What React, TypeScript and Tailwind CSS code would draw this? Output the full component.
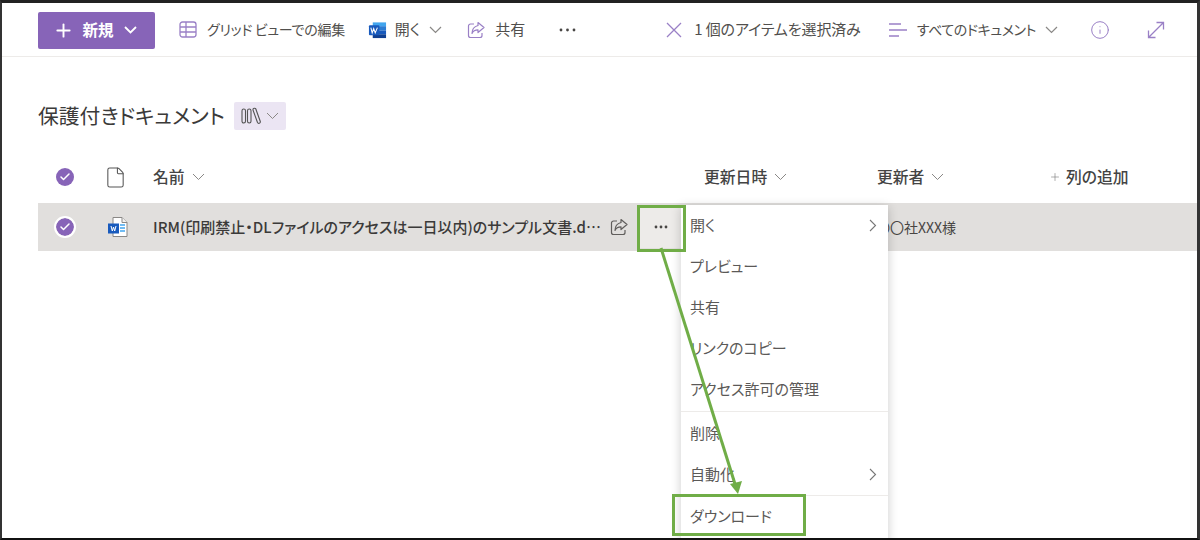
import { Plus, Info, File, Check } from 'lucide-react';

const jp = "font-['Noto_Sans_CJK_JP','Noto_Sans',sans-serif] [font-feature-settings:'palt']";

function WordIcon({ small }: { small?: boolean }) {
  if (small) {
    return (
      <svg width="22" height="22" viewBox="0 0 22 22">
        <path d="M6 1.500h9l5 5v14H6z" fill="#fff" stroke="#8a8886" />
        <path d="M15 1.500v5h5" fill="#f3f2f1" stroke="#8a8886" />
        <path d="M13 9h5M13 12h5M13 15h5" stroke="#41a5ee" strokeWidth="1.500" />
        <rect x="1" y="7.500" width="11" height="10" fill="#185abd" />
        <path d="M4 10l1.300 5 1.200-4 1.200 4 1.300-5" fill="none" stroke="#fff" strokeWidth="1" />
      </svg>
    );
  }
  return (
    <svg width="19" height="20" viewBox="0 0 20 20">
      <rect x="5" y="2" width="14" height="4" fill="#41a5ee" />
      <rect x="5" y="6" width="14" height="4.500" fill="#2b7cd3" />
      <rect x="5" y="10.500" width="14" height="4" fill="#185abd" />
      <rect x="5" y="14.500" width="14" height="4" fill="#103f91" />
      <rect x="1" y="5" width="11" height="10.500" rx="1" fill="#185abd" />
      <path d="M3 7.500l1.400 5.500 1.600-4.500 1.600 4.500L9.900 7.500" fill="none" stroke="#fff" strokeWidth="1.100" />
    </svg>
  );
}

function Caret({ className, color = '#8a8886', width = 1.2 }: { className?: string; color?: string; width?: number }) {
  return (
    <svg width="13" height="8" viewBox="0 0 13 8" fill="none" stroke={color} strokeWidth={width} className={className}>
      <path d="M1 1l5.500 5.500L12 1" />
    </svg>
  );
}

function Dots({ width, color = '#484644' }: { width: number; color?: string }) {
  return (
    <svg width={width} height="4" viewBox={`0 0 ${width} 4`} fill={color}>
      <circle cx="2" cy="2" r="1.400" />
      <circle cx={width / 2} cy="2" r="1.400" />
      <circle cx={width - 2} cy="2" r="1.400" />
    </svg>
  );
}

function ShareIcon({ color }: { color: string }) {
  return (
    <svg width="18" height="18" viewBox="0 0 18 18" fill="none" stroke={color} strokeWidth="1.200" strokeLinejoin="round">
      <path d="M7 3H3.500A2 2 0 0 0 1.500 5v9.500a2 2 0 0 0 2 2H13a2 2 0 0 0 2-2V12" />
      <path d="M11 1.500L17 6.500L11 11.500V8.800C8 8.800 6 10 5 12.500C5 8.500 7 5.500 11 4.500z" />
    </svg>
  );
}

function CheckCircle({ ring }: { ring?: boolean }) {
  return (
    <span className={`flex h-[18px] w-[18px] items-center justify-center rounded-full bg-[#8764b8] ${ring ? 'outline-2 outline-white' : ''}`}>
      <Check size={12} strokeWidth={3} className="text-white" />
    </span>
  );
}

function ToolItem({ icon, label, caret, className, labelClass }: { icon?: React.ReactNode; label: string; caret?: boolean; className?: string; labelClass?: string }) {
  return (
    <div className={`flex items-center whitespace-nowrap text-[15px] text-[#514f4d] ${className ?? ''}`}>
      {icon}
      <span className={labelClass ?? 'ml-[10px]'}>{label}</span>
      {caret && <Caret className="ml-[9px]" />}
    </div>
  );
}

function HeadCell({ label, className }: { label: string; className?: string }) {
  return (
    <div className={`flex items-center text-[15.800px] font-medium text-[#444] ${className ?? ''}`}>
      {label}
      <Caret className="ml-[7px]" width={1} />
    </div>
  );
}

const menuGroups = [
  {
    className: 'pb-[1px]',
    items: [
      { label: '開く', more: true },
      { label: 'プレビュー' },
      { label: '共有' },
      { label: 'リンクのコピー' },
      { label: 'アクセス許可の管理' },
    ],
  },
  {
    className: 'border-t border-[#edebe9] pt-[1px]',
    items: [{ label: '削除' }, { label: '自動化', more: true }],
  },
  {
    className: 'border-t border-[#edebe9] pb-[6px]',
    items: [{ label: 'ダウンロード' }],
  },
];

function ContextMenu() {
  return (
    <div className="absolute left-[679px] top-[202px] w-[207px] bg-white shadow-[0_2px_10px_rgba(0,0,0,0.2)]">
      {menuGroups.map((group, i) => (
        <div key={i} className={group.className}>
          {group.items.map((item) => (
            <div key={item.label} className="flex h-[41px] items-center justify-between pl-[9px] pr-[11px] text-[15px] text-[#5b5957]">
              {item.label}
              {item.more && (
                <svg width="8" height="13" viewBox="0 0 8 13" fill="none" stroke="#777" strokeWidth="1.100">
                  <path d="M1 1l5.500 5.500L1 12" />
                </svg>
              )}
            </div>
          ))}
        </div>
      ))}
    </div>
  );
}

export default function App() {
  return (
    <div className={`relative h-[540px] w-[1200px] overflow-hidden border-l-[2px] border-r-[3px] border-t-[3px] border-b-[2px] border-x-[#333] border-t-[#222] border-b-[#111] bg-white ${jp}`}>
      {/* command bar */}
      <div className="flex h-[54px] items-center border-b border-[#edebe9] pl-[36px] pr-[32px]">
        <div className="mt-[1px] flex h-[37px] w-[117px] items-center justify-center rounded-[2px] bg-[#8764b8] text-[15.500px] font-bold text-white">
          <Plus size={21} strokeWidth={2.2} className="-mx-[3px]" />
          <span className="ml-[11px]">新規</span>
          <Caret className="ml-[10px]" color="#fff" width={1.800} />
        </div>
        <ToolItem
          className="ml-[24px]"
          labelClass="ml-[10px] text-[14px] tracking-[-0.3px]"
          icon={
            <svg width="18" height="17" viewBox="0 0 18 17" fill="none" stroke="#9a80c6" strokeWidth="1.300">
              <rect x="1" y="1" width="16" height="15" rx="2.500" />
              <path d="M1 6h16M1 11h16M7 1v15" />
            </svg>
          }
          label="グリッド ビューでの編集"
        />
        <ToolItem className="ml-[23px]" labelClass="ml-[8px]" icon={<WordIcon />} label="開く" caret />
        <ToolItem className="ml-[25px]" icon={<ShareIcon color="#9a80c6" />} label="共有" />
        <span className="ml-[34px]"><Dots width={17} /></span>
        <ToolItem
          className="ml-auto"
          labelClass="ml-[12px] tracking-[-0.12px]"
          icon={
            <svg width="16" height="16" viewBox="0 0 16 16" fill="none" stroke="#9a80c6" strokeWidth="1.300">
              <path d="M1 1l14 14M15 1L1 15" />
            </svg>
          }
          label="1 個のアイテムを選択済み"
        />
        <ToolItem
          className="ml-[27px]"
          labelClass="ml-[10px] text-[14px] tracking-[-0.4px]"
          icon={
            <svg width="19" height="16" viewBox="0 0 19 16" fill="none" stroke="#9a80c6" strokeWidth="1.300">
              <path d="M1 2h12M1 8h18M1 14h10" />
            </svg>
          }
          label="すべてのドキュメント"
          caret
        />
        <Info size={20} strokeWidth={1.200} className="ml-[32px] text-[#9a80c6]" />
        <svg width="18" height="18" viewBox="0 0 18 18" fill="none" stroke="#9a80c6" strokeWidth="1.300" className="ml-[37px]">
          <path d="M1.500 16.500L16.500 1.500M9.500 1.500h7v7M1.500 9.500v7h7" />
        </svg>
      </div>

      {/* library title */}
      <div className="ml-[36px] mt-[45px] flex h-[28px] items-center">
        <h1 className="mb-[2px] text-[20.800px] font-normal leading-none text-[#3b3a39]">保護付きドキュメント</h1>
        <div className="ml-[9px] flex h-[28px] w-[52px] items-center justify-center gap-[5px] rounded-[2px] bg-[#ebe5f3]">
          <svg width="20" height="18" viewBox="0 0 20 18" fill="none" stroke="#555" strokeWidth="1.100">
            <rect x="1" y="2" width="3.500" height="14" rx="1.700" />
            <rect x="6.500" y="2" width="3.500" height="14" rx="1.700" />
            <path d="M12 3l4.500 12.500a1.500 1.500 0 0 0 2.800-1L15 2.500a1.500 1.500 0 0 0-3 .5z" />
          </svg>
          <Caret width={1} />
        </div>
      </div>

      {/* column headers */}
      <div className="mt-[27px] flex h-[40px] items-center pl-[54px]">
        <CheckCircle />
        <File size={23} strokeWidth={1.100} className="ml-[30px] text-[#555]" />
        <HeadCell label="名前" className="ml-[26px] w-[551px]" />
        <HeadCell label="更新日時" className="w-[173px]" />
        <HeadCell label="更新者" className="w-[172px]" />
        <div className="flex items-center text-[15.800px] font-medium text-[#444]">
          <Plus size={12} strokeWidth={1.200} className="mr-[5px] text-[#777]" />
          列の追加
        </div>
      </div>

      {/* selected row */}
      <div className="ml-[36px] mt-[6px] flex h-[48px] items-center bg-[#e1dfdd] pl-[18px]">
        <CheckCircle ring />
        <span className="ml-[33px]"><WordIcon small /></span>
        <div className="ml-[24px] w-[450px] truncate text-[15px] font-medium text-[#3b3a39]">
          IRM(印刷禁止・DLファイルのアクセスは一日以内)のサンプル文書.docx
        </div>
        <span className="ml-[7px]"><ShareIcon color="#605e5c" /></span>
        <div className="ml-[9px] flex h-[42px] w-[48px] items-center justify-center bg-[#edebe9]">
          <Dots width={14} />
        </div>
        <span className="ml-[191px] text-[14px] text-[#484644]">〇〇社XXX様</span>
      </div>

      <ContextMenu />

      {/* green call-outs drawn over the screenshot */}
      <div className="absolute left-[635px] top-[202px] h-[47px] w-[49px] border-[3px] border-[#70ad47]" />
      <div className="absolute left-[670px] top-[491px] h-[42px] w-[134px] border-[3px] border-[#70ad47]" />
      <svg className="absolute left-0 top-0" width="1195" height="535" fill="none">
        <path d="M659 245L733 481" stroke="#70ad47" strokeWidth="3" />
        <path d="M728 481L740 478L736 491z" fill="#70ad47" />
      </svg>
    </div>
  );
}
